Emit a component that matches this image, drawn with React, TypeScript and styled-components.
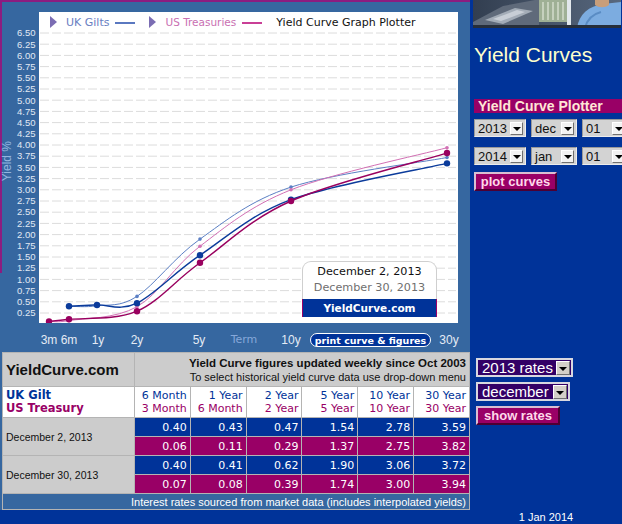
import React from "react";
import styled, { createGlobalStyle } from "styled-components";

const NAVY = "#003399";
const STEEL = "#3667a0";
const MAGENTA = "#990066";
const PLUM = "#8c1c80";

type Term = "3m" | "6m" | "1y" | "2y" | "5y" | "10y" | "30y";

// plot-space x of each term (the white plot box starts 39px from the left)
const TERM_X: Record<Term, number> = {
  "3m": 10,
  "6m": 30,
  "1y": 58,
  "2y": 98,
  "5y": 161,
  "10y": 252,
  "30y": 408,
};
const PLOT_W = 419;
const PLOT_H = 311;
const py = (v: number) => 312.2 - 44.8 * v;

const ukTerms: Term[] = ["6m", "1y", "2y", "5y", "10y", "30y"];
const usTerms: Term[] = ["3m", "6m", "2y", "5y", "10y", "30y"];
const ukLabels = ["6 Month", "1 Year", "2 Year", "5 Year", "10 Year", "30 Year"];
const usLabels = ["3 Month", "6 Month", "2 Year", "5 Year", "10 Year", "30 Year"];

const snapshots = [
  {
    date: "December 2, 2013",
    uk: [0.4, 0.43, 0.47, 1.54, 2.78, 3.59],
    us: [0.06, 0.11, 0.29, 1.37, 2.75, 3.82],
    main: true,
  },
  {
    date: "December 30, 2013",
    uk: [0.4, 0.41, 0.62, 1.9, 3.06, 3.72],
    us: [0.07, 0.08, 0.39, 1.74, 3.0, 3.94],
    main: false,
  },
];

const yTicks = Array.from({ length: 26 }, (_, i) => (6.5 - i * 0.25).toFixed(2));

const xTicks: { label: string; x: number; muted?: boolean }[] = [
  { label: "3m", x: 49 },
  { label: "6m", x: 69 },
  { label: "1y", x: 98 },
  { label: "2y", x: 137 },
  { label: "5y", x: 199 },
  { label: "Term", x: 244, muted: true },
  { label: "10y", x: 291 },
  { label: "30y", x: 449 },
];

function smoothPath(pts: [number, number][]) {
  let d = `M${pts[0][0]},${pts[0][1]}`;
  for (let i = 0; i < pts.length - 1; i++) {
    const p0 = pts[i - 1] || pts[i];
    const p1 = pts[i];
    const p2 = pts[i + 1];
    const p3 = pts[i + 2] || p2;
    const c1x = p1[0] + (p2[0] - p0[0]) / 6;
    const c1y = p1[1] + (p2[1] - p0[1]) / 6;
    const c2x = p2[0] - (p3[0] - p1[0]) / 6;
    const c2y = p2[1] - (p3[1] - p1[1]) / 6;
    d += ` C${c1x.toFixed(1)},${c1y.toFixed(1)} ${c2x.toFixed(1)},${c2y.toFixed(1)} ${p2[0]},${p2[1].toFixed(1)}`;
  }
  return d;
}

const GlobalStyle = createGlobalStyle`
  html, body { margin: 0; padding: 0; background: ${NAVY}; }
  #root { width: 622px; height: 524px; overflow: hidden; }
`;

export default function App() {
  const curves = [
    { terms: ukTerms, key: "uk" as const, color: "#5b7fc4", snap: snapshots[1] },
    { terms: usTerms, key: "us" as const, color: "#d270b4", snap: snapshots[1] },
    { terms: ukTerms, key: "uk" as const, color: "#0b3b9b", snap: snapshots[0] },
    { terms: usTerms, key: "us" as const, color: "#99005f", snap: snapshots[0] },
  ];

  return (
    <Page>
      <GlobalStyle />
      <ChartPanel>
        <YAxis>
          <AxisTitle>Yield %</AxisTitle>
          <TickList>
            {yTicks.map((t) => (
              <Tick key={t}>{t}</Tick>
            ))}
          </TickList>
        </YAxis>
        <PlotBox>
          <svg width={PLOT_W} height={PLOT_H} style={{ display: "block" }}>
            {yTicks.map((t) => (
              <line
                key={t}
                x1={1}
                x2={PLOT_W - 2}
                y1={py(parseFloat(t))}
                y2={py(parseFloat(t))}
                stroke="#dcdcdc"
                strokeWidth={1}
                strokeDasharray="9 3"
              />
            ))}
            {curves.map((c, i) => {
              const pts = c.terms.map(
                (t, j) => [TERM_X[t], py(c.snap[c.key][j])] as [number, number]
              );
              return (
                <g key={i}>
                  <path
                    d={smoothPath(pts)}
                    fill="none"
                    stroke={c.color}
                    strokeWidth={c.snap.main ? 1.4 : 1}
                  />
                  {pts.map(([x, y], j) => (
                    <circle
                      key={j}
                      cx={x}
                      cy={y}
                      r={c.snap.main ? 3.2 : 1.8}
                      fill={c.color}
                    />
                  ))}
                </g>
              );
            })}
          </svg>
          <Legend>
            <LegendMark />
            <LegendName $tone="uk">UK Gilts</LegendName>
            <LegendLine $tone="uk" />
            <LegendMark />
            <LegendName $tone="us">US Treasuries</LegendName>
            <LegendLine $tone="us" />
            <LegendTitle>Yield Curve Graph Plotter</LegendTitle>
          </Legend>
          <DateCard>
            <DateLine>December 2, 2013</DateLine>
            <DateLine $muted>December 30, 2013</DateLine>
            <DateBrand>YieldCurve.com</DateBrand>
          </DateCard>
        </PlotBox>
        <XAxis>
          {xTicks.map((t) => (
            <XTick key={t.label} $muted={t.muted} style={{ left: t.x - 39 }}>
              {t.label}
            </XTick>
          ))}
          <PrintButton>print curve &amp; figures</PrintButton>
        </XAxis>
      </ChartPanel>

      <SideTop>
        <Photo />
        <Title>Yield Curves</Title>
        <PlotterBar>Yield Curve Plotter</PlotterBar>
        <SelectRow>
          <Select $w={52}>2013<Arrow /></Select>
          <Select $w={46}>dec<Arrow /></Select>
          <Select $w={46}>01<Arrow /></Select>
        </SelectRow>
        <SelectRow>
          <Select $w={52}>2014<Arrow /></Select>
          <Select $w={46}>jan<Arrow /></Select>
          <Select $w={46}>01<Arrow /></Select>
        </SelectRow>
        <ActionButton $w={83}>plot curves</ActionButton>
      </SideTop>

      <TablePanel>
        <RatesTable>
          <tbody>
            <tr>
              <BrandCell>YieldCurve.com</BrandCell>
              <NoteCell colSpan={6}>
                <b>Yield Curve figures updated weekly since Oct 2003</b>
                <br />
                To select historical yield curve data use drop-down menu
              </NoteCell>
            </tr>
            <tr>
              <SeriesCell>
                <Ink $tone="uk">UK Gilt</Ink>
                <Ink $tone="us">US Treasury</Ink>
              </SeriesCell>
              {ukLabels.map((l, i) => (
                <TermCell key={l}>
                  <Ink $tone="uk">{l}</Ink>
                  <Ink $tone="us">{usLabels[i]}</Ink>
                </TermCell>
              ))}
            </tr>
            {snapshots.map((s) => (
              <React.Fragment key={s.date}>
                <tr>
                  <DateCell rowSpan={2}>{s.date}</DateCell>
                  {s.uk.map((v, i) => (
                    <ValueCell key={i} $tone="uk">
                      {v.toFixed(2)}
                    </ValueCell>
                  ))}
                </tr>
                <tr>
                  {s.us.map((v, i) => (
                    <ValueCell key={i} $tone="us">
                      {v.toFixed(2)}
                    </ValueCell>
                  ))}
                </tr>
              </React.Fragment>
            ))}
            <tr>
              <SourceCell colSpan={7}>
                Interest rates sourced from market data (includes interpolated yields)
              </SourceCell>
            </tr>
          </tbody>
        </RatesTable>
      </TablePanel>

      <SideBottom>
        <DarkSelect $w={97}>
          <SelectText>2013 rates</SelectText>
          <Arrow $dark />
        </DarkSelect>
        <DarkSelect $w={94}>
          <SelectText>december</SelectText>
          <Arrow $dark />
        </DarkSelect>
        <ActionButton $w={84}>show rates</ActionButton>
      </SideBottom>

      <Stamp>1 Jan 2014</Stamp>
    </Page>
  );
}

function Photo() {
  return (
    <PhotoFrame width="148" height="28" viewBox="0 0 148 28">
      <defs>
        <linearGradient id="desk" x1="0" x2="1">
          <stop offset="0" stopColor="#323e50" />
          <stop offset="1" stopColor="#58687e" />
        </linearGradient>
      </defs>
      <rect width="148" height="28" fill="url(#desk)" />
      <path d="M0 22 L30 6 L62 0 L66 0 L66 26 L0 28Z" fill="#5f6a7a" />
      <path d="M12 20 L42 8 L60 11 L30 24Z" fill="#a3acb7" />
      <path d="M20 19 L44 10 L52 12 L28 21Z" fill="#c8ced6" />
      <rect x="66" y="0" width="28" height="22" fill="#9fb095" />
      <path d="M70 2 v18 M75 2 v18 M80 2 v18 M85 2 v18 M90 2 v18" stroke="#d3dccb" strokeWidth="1.5" />
      <rect x="94" y="0" width="4" height="28" fill="#e2e8ec" />
      <path d="M104 28 C106 14 116 6 130 4 L148 2 L148 28Z" fill="#7cace0" />
      <path d="M112 28 C114 20 120 14 128 12" stroke="#5a8cc4" strokeWidth="2" fill="none" />
      <path d="M122 0 h14 v5 c-4 3 -10 3 -14 0z" fill="#c89e7a" />
      <rect x="0" y="25" width="148" height="3" fill="#262e3a" />
    </PhotoFrame>
  );
}

const Page = styled.div`
  display: grid;
  grid-template-columns: 470px 152px;
  grid-template-rows: 352px 158px 14px;
  width: 622px;
  height: 524px;
  background: ${NAVY};
  font-family: "Liberation Sans", Arial, sans-serif;
`;

const ChartPanel = styled.section`
  grid-column: 1;
  grid-row: 1;
  box-sizing: border-box;
  border-top: 2px solid ${PLUM};
  padding-top: 10px;
  background: linear-gradient(${PLUM}, ${PLUM}) 0 0 / 2px 271px no-repeat,
    ${STEEL};
  display: grid;
  grid-template-columns: 39px 419px;
  grid-template-rows: 311px 29px;
`;

const YAxis = styled.div`
  display: flex;
`;

const AxisTitle = styled.div`
  writing-mode: vertical-rl;
  transform: rotate(180deg);
  margin-top: 129px;
  align-self: flex-start;
  width: 15px;
  padding-left: 2px;
  font: 12px "Liberation Sans", Arial, sans-serif;
  color: #93b6e0;
  line-height: 15px;
  white-space: nowrap;
`;

const TickList = styled.div`
  flex: 1;
  padding-top: 15.4px;
  padding-right: 4px;
  display: flex;
  flex-direction: column;
  align-items: flex-end;
`;

const Tick = styled.span`
  height: 11.2px;
  line-height: 11.2px;
  font: 9.5px "Liberation Sans", Arial, sans-serif;
  color: #e2e9f4;
`;

const PlotBox = styled.div`
  position: relative;
  background: #ffffff;
`;

const Legend = styled.div`
  position: absolute;
  top: 3px;
  left: 11px;
  display: flex;
  align-items: center;
  height: 14px;
  font: 11px "DejaVu Sans", Verdana, sans-serif;
`;

const LegendMark = styled.span`
  width: 0;
  height: 0;
  border-left: 7px solid #7b6db3;
  border-top: 6px solid transparent;
  border-bottom: 6px solid transparent;
  margin-right: 9px;
`;

const LegendName = styled.span<{ $tone: "uk" | "us" }>`
  color: ${(p) => (p.$tone === "uk" ? "#6a80c2" : "#c96fb2")};
  font-size: ${(p) => (p.$tone === "uk" ? "11px" : "10.5px")};
`;

const LegendLine = styled.span<{ $tone: "uk" | "us" }>`
  width: 20px;
  height: 2px;
  margin: 1px 14px 0 6px;
  background: ${(p) => (p.$tone === "uk" ? "#5a78c0" : "#c93f96")};
  &:nth-of-type(2) {
    margin-right: 30px;
  }
`;

const LegendTitle = styled.span`
  color: #111;
  font-size: 11px;
`;

const DateCard = styled.div`
  position: absolute;
  left: 263px;
  top: 249px;
  width: 135px;
  box-sizing: border-box;
  background: #fff;
  border: 1px solid #cfcfcf;
  border-bottom: none;
  border-radius: 9px 9px 0 0;
  padding-top: 2px;
  text-align: center;
  font-family: "DejaVu Sans", Verdana, sans-serif;
`;

const DateLine = styled.div<{ $muted?: boolean }>`
  height: 16px;
  line-height: 16px;
  font-size: 11.2px;
  color: ${(p) => (p.$muted ? "#6f6f6f" : "#111")};
`;

const DateBrand = styled.div`
  margin: 3px -1px 0;
  height: 18px;
  line-height: 18px;
  background: ${NAVY};
  border-left: 1px solid ${MAGENTA};
  border-right: 1px solid ${MAGENTA};
  color: #fff;
  font-weight: bold;
  font-size: 10.5px;
`;

const XAxis = styled.div`
  grid-column: 2;
  position: relative;
`;

const XTick = styled.span<{ $muted?: boolean }>`
  position: absolute;
  top: 10px;
  transform: translateX(-50%);
  line-height: 14px;
  white-space: nowrap;
  font: ${(p) =>
    p.$muted
      ? '11px "DejaVu Sans", Verdana, sans-serif'
      : '12px "Liberation Sans Narrow", "Liberation Sans", Arial, sans-serif'};
  color: ${(p) => (p.$muted ? "#86a8da" : "#e4ebf5")};
`;

const PrintButton = styled.button`
  position: absolute;
  left: 271px;
  top: 10px;
  width: 121px;
  height: 14px;
  padding: 0;
  box-sizing: border-box;
  border: 1.5px solid #fff;
  border-radius: 8px;
  background: ${NAVY};
  color: #fff;
  font: bold 9.5px "DejaVu Sans", Verdana, sans-serif;
  line-height: 11px;
  white-space: nowrap;
`;

const SideTop = styled.aside`
  grid-column: 2;
  grid-row: 1;
  padding-left: 4px;
  display: flex;
  flex-direction: column;
  align-items: flex-start;
`;

const PhotoFrame = styled.svg`
  display: block;
  margin-left: -1px;
`;

const Title = styled.h1`
  margin: 15px 0 0;
  font: normal 21px "Liberation Sans", Arial, sans-serif;
  line-height: 24px;
  color: #ffffcc;
`;

const PlotterBar = styled.div`
  align-self: stretch;
  margin-top: 32px;
  height: 14px;
  padding-left: 4px;
  background: ${MAGENTA};
  color: #ffe6d6;
  font: bold 14px "Liberation Sans", Arial, sans-serif;
  line-height: 15px;
`;

const SelectRow = styled.div`
  display: flex;
  gap: 5px;
  margin-top: 6px;
  & + & {
    margin-top: 10px;
  }
`;

const Select = styled.div<{ $w: number }>`
  width: ${(p) => p.$w}px;
  height: 18px;
  flex: none;
  box-sizing: border-box;
  display: flex;
  align-items: center;
  justify-content: space-between;
  padding: 0 2px 0 3px;
  background: #d3d3d3;
  border: 1px solid;
  border-color: #9a9a9a #ececec #ececec #9a9a9a;
  font: 13px "Liberation Sans", Arial, sans-serif;
  color: #111;
`;

const Arrow = styled.span<{ $dark?: boolean }>`
  width: ${(p) => (p.$dark ? 14 : 13)}px;
  height: ${(p) => (p.$dark ? 14 : 13)}px;
  flex: none;
  box-sizing: border-box;
  display: flex;
  align-items: center;
  justify-content: center;
  background: ${(p) => (p.$dark ? "#d4d0c8" : "#f2f2f2")};
  border: 1px solid;
  border-color: #fff #707070 #707070 #fff;
  &::after {
    content: "";
    margin-top: 2px;
    border-top: 4px solid #000;
    border-left: 4px solid transparent;
    border-right: 4px solid transparent;
  }
`;

const ActionButton = styled.button<{ $w: number }>`
  width: ${(p) => p.$w}px;
  height: 19px;
  margin-top: 7px;
  padding: 0;
  box-sizing: border-box;
  background: ${MAGENTA};
  border: 2px solid;
  border-color: #d9bfd2 #4d0033 #4d0033 #d9bfd2;
  color: #ffd9ea;
  font: bold 13px "Liberation Sans", Arial, sans-serif;
  line-height: 14px;
`;

const TablePanel = styled.div`
  grid-column: 1;
  grid-row: 2;
  background: ${STEEL};
  padding-left: 2px;
`;

const RatesTable = styled.table`
  width: 468px;
  border-collapse: separate;
  border-spacing: 1px;
  background: #b4b4b4;
  table-layout: fixed;
  font-family: "DejaVu Sans", Verdana, sans-serif;
  & td {
    padding: 0 3px;
    overflow: hidden;
    white-space: nowrap;
  }
`;

const BrandCell = styled.td`
  width: 125px;
  height: 33px;
  background: #cccccc;
  font: bold 15px "Liberation Sans", Arial, sans-serif;
  color: #111;
`;

const NoteCell = styled.td`
  background: #cccccc;
  text-align: right;
  font: 11px "Liberation Sans", Arial, sans-serif;
  line-height: 14px;
  color: #111;
  & b {
    font-size: 11.5px;
  }
`;

const SeriesCell = styled.td`
  height: 30px;
  background: #fff;
  font-weight: bold;
  font-size: 11.5px;
  line-height: 13px;
`;

const TermCell = styled.td`
  background: #fff;
  text-align: right;
  font-size: 11px;
  line-height: 13px;
`;

const Ink = styled.div<{ $tone: "uk" | "us" }>`
  color: ${(p) => (p.$tone === "uk" ? NAVY : MAGENTA)};
`;

const DateCell = styled.td`
  background: #cccccc;
  font: 10.5px "Liberation Sans", Arial, sans-serif;
  color: #111;
`;

const ValueCell = styled.td<{ $tone: "uk" | "us" }>`
  height: 18px;
  background: ${(p) => (p.$tone === "uk" ? NAVY : MAGENTA)};
  color: #fff;
  text-align: right;
  font-size: 11px;
`;

const SourceCell = styled.td`
  height: 15px;
  background: ${STEEL};
  color: #fff;
  text-align: right;
  font: 11px "Liberation Sans", Arial, sans-serif;
`;

const SideBottom = styled.aside`
  grid-column: 2;
  grid-row: 2;
  padding: 6px 0 0 6px;
  display: flex;
  flex-direction: column;
  align-items: flex-start;
  gap: 5px;
  & > button {
    margin-top: 0;
  }
`;

const DarkSelect = styled.div<{ $w: number }>`
  width: ${(p) => p.$w}px;
  height: 19px;
  box-sizing: border-box;
  display: flex;
  align-items: center;
  justify-content: space-between;
  gap: 1px;
  padding: 0 1px 0 4px;
  background: #330066;
  border: 2px solid #d8d8e0;
  color: #fff;
  font: 15px "Liberation Sans", Arial, sans-serif;
  line-height: 15px;
`;

const SelectText = styled.span`
  white-space: nowrap;
`;

const Stamp = styled.div`
  grid-column: 2;
  grid-row: 3;
  text-align: center;
  font: 11px "Liberation Sans", Arial, sans-serif;
  line-height: 14px;
  color: #fff;
`;
